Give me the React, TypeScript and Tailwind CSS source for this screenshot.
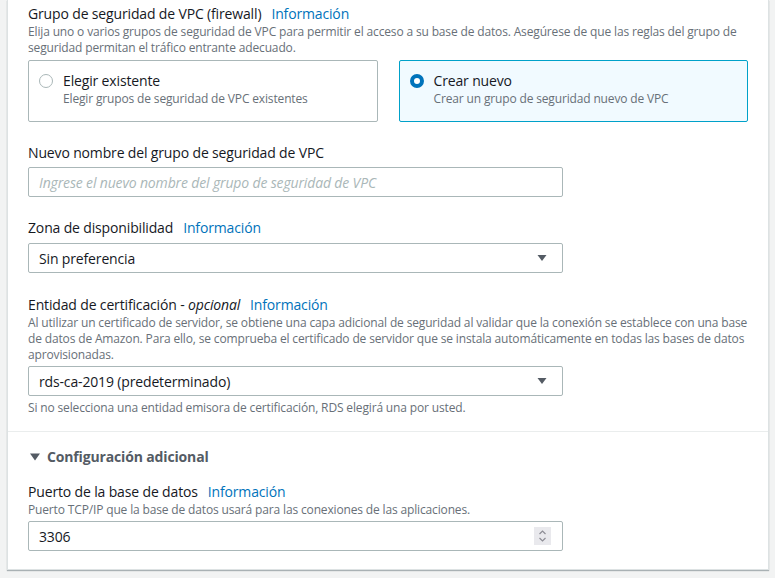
import React from 'react'

const Info = () => (
  <a href="#" className="ml-[10px] text-[14px] text-[#0073bb]">
    Información
  </a>
)

const Caret = () => (
  <svg width="10" height="8" viewBox="0 0 10 8" className="shrink-0">
    <path d="M0.5 1 L9.5 1 L5 7 Z" fill="#545b64" />
  </svg>
)

const Tile = ({
  title,
  sub,
  selected,
}: {
  title: string
  sub: string
  selected?: boolean
}) => (
  <label
    className={
      selected
        ? 'flex h-[62px] flex-1 items-start gap-[10px] rounded-[2px] border border-[#00a1c9] bg-[#f1faff] pt-[10px] pl-[10px]'
        : 'flex h-[62px] flex-1 items-start gap-[10px] rounded-[2px] border border-[#aab7b8] bg-white pt-[10px] pl-[10px]'
    }
  >
    <span className="mt-[3px] flex size-[14px] shrink-0 items-center justify-center">
      {selected ? (
        <span className="size-[14px] rounded-full border-[4px] border-[#0073bb] bg-white" />
      ) : (
        <span className="size-[14px] rounded-full border-[1.5px] border-[#aab7b8] bg-white" />
      )}
    </span>
    <span className="flex flex-col">
      <span className="text-[14px] leading-5 text-[#16191f]">{title}</span>
      <span className="text-[12px] leading-4 text-[#687078]">{sub}</span>
    </span>
  </label>
)

export default function App() {
  return (
    <div className="min-h-[578px] bg-[#f2f3f3] font-['Open_Sans',sans-serif] tracking-[-0.15px]">
      <div className="ml-[7px] w-[762px] border-x border-b border-[#dde2e3] bg-white shadow-[0_1px_1px_rgba(0,28,36,0.3)]">
        <div className="px-5 pt-[4px] pb-[15px]">
          <div className="flex items-center leading-5">
            <span className="text-[14px] text-[#16191f]">Grupo de seguridad de VPC (firewall)</span>
            <Info />
          </div>
          <p className="text-[12px] leading-4 text-[#687078]">
            Elija uno o varios grupos de seguridad de VPC para permitir el acceso a su base de datos. Asegúrese de que las reglas del grupo de seguridad permitan el tráfico entrante adecuado.
          </p>
          <div className="mt-[4px] flex gap-[21px]">
            <Tile title="Elegir existente" sub="Elegir grupos de seguridad de VPC existentes" />
            <Tile title="Crear nuevo" sub="Crear un grupo de seguridad nuevo de VPC" selected />
          </div>

          <div className="mt-[21px] text-[14px] leading-5 text-[#16191f]">
            Nuevo nombre del grupo de seguridad de VPC
          </div>
          <input
            className="mt-[4px] h-[30px] w-[535px] rounded-[2px] border border-[#aab7b8] px-[10px] text-[14px] outline-none placeholder:italic placeholder:text-[#aab7b8]"
            placeholder="Ingrese el nuevo nombre del grupo de seguridad de VPC"
          />

          <div className="mt-[21px] flex items-center leading-5">
            <span className="text-[14px] text-[#16191f]">Zona de disponibilidad</span>
            <Info />
          </div>
          <div className="mt-[5px] flex h-[30px] w-[535px] items-center justify-between rounded-[2px] border border-[#aab7b8] pr-[15px] pl-[10px]">
            <span className="text-[14px] text-[#16191f]">Sin preferencia</span>
            <Caret />
          </div>

          <div className="mt-[22px] flex items-center leading-5">
            <span className="text-[14px] text-[#16191f]">
              Entidad de certificación - <i>opcional</i>
            </span>
            <Info />
          </div>
          <p className="text-[12px] leading-4 text-[#687078]">
            Al utilizar un certificado de servidor, se obtiene una capa adicional de seguridad al validar que la conexión se establece con una base de datos de Amazon. Para ello, se comprueba el certificado de servidor que se instala automáticamente en todas las bases de datos aprovisionadas.
          </p>
          <div className="mt-[3px] flex h-[30px] w-[535px] items-center justify-between rounded-[2px] border border-[#aab7b8] pr-[15px] pl-[10px]">
            <span className="text-[14px] text-[#16191f]">rds-ca-2019 (predeterminado)</span>
            <Caret />
          </div>
          <p className="mt-[4px] text-[12px] leading-4 text-[#687078]">
            Si no selecciona una entidad emisora de certificación, RDS elegirá una por usted.
          </p>
        </div>

        <div className="border-t border-[#eaeded] px-5 pt-[15px] pb-[18px]">
          <div className="flex items-center gap-[6px] leading-5">
            <svg width="12" height="10" viewBox="0 0 12 10" className="ml-[1px]">
              <path d="M1 1.5 L11 1.5 L6 8.5 Z" fill="#545b64" />
            </svg>
            <span className="text-[14px] font-bold text-[#545b64]">Configuración adicional</span>
          </div>

          <div className="mt-[15px] flex items-center leading-5">
            <span className="text-[14px] text-[#16191f]">Puerto de la base de datos</span>
            <Info />
          </div>
          <p className="text-[12px] leading-4 text-[#687078]">
            Puerto TCP/IP que la base de datos usará para las conexiones de las aplicaciones.
          </p>
          <div className="mt-[3px] flex h-[30px] w-[535px] items-center justify-between rounded-[2px] border border-[#aab7b8] pr-[11px] pl-[10px]">
            <span className="text-[14px] text-[#16191f]">3306</span>
            <span className="flex h-[18px] w-[17px] flex-col items-center justify-center bg-[#e9e9ed]">
              <svg width="9" height="14" viewBox="0 0 9 14">
                <path d="M1.5 5 L4.5 2 L7.5 5" fill="none" stroke="#8d8d95" strokeWidth="1.2" />
                <path d="M1.5 9 L4.5 12 L7.5 9" fill="none" stroke="#8d8d95" strokeWidth="1.2" />
              </svg>
            </span>
          </div>
        </div>
      </div>
    </div>
  )
}
